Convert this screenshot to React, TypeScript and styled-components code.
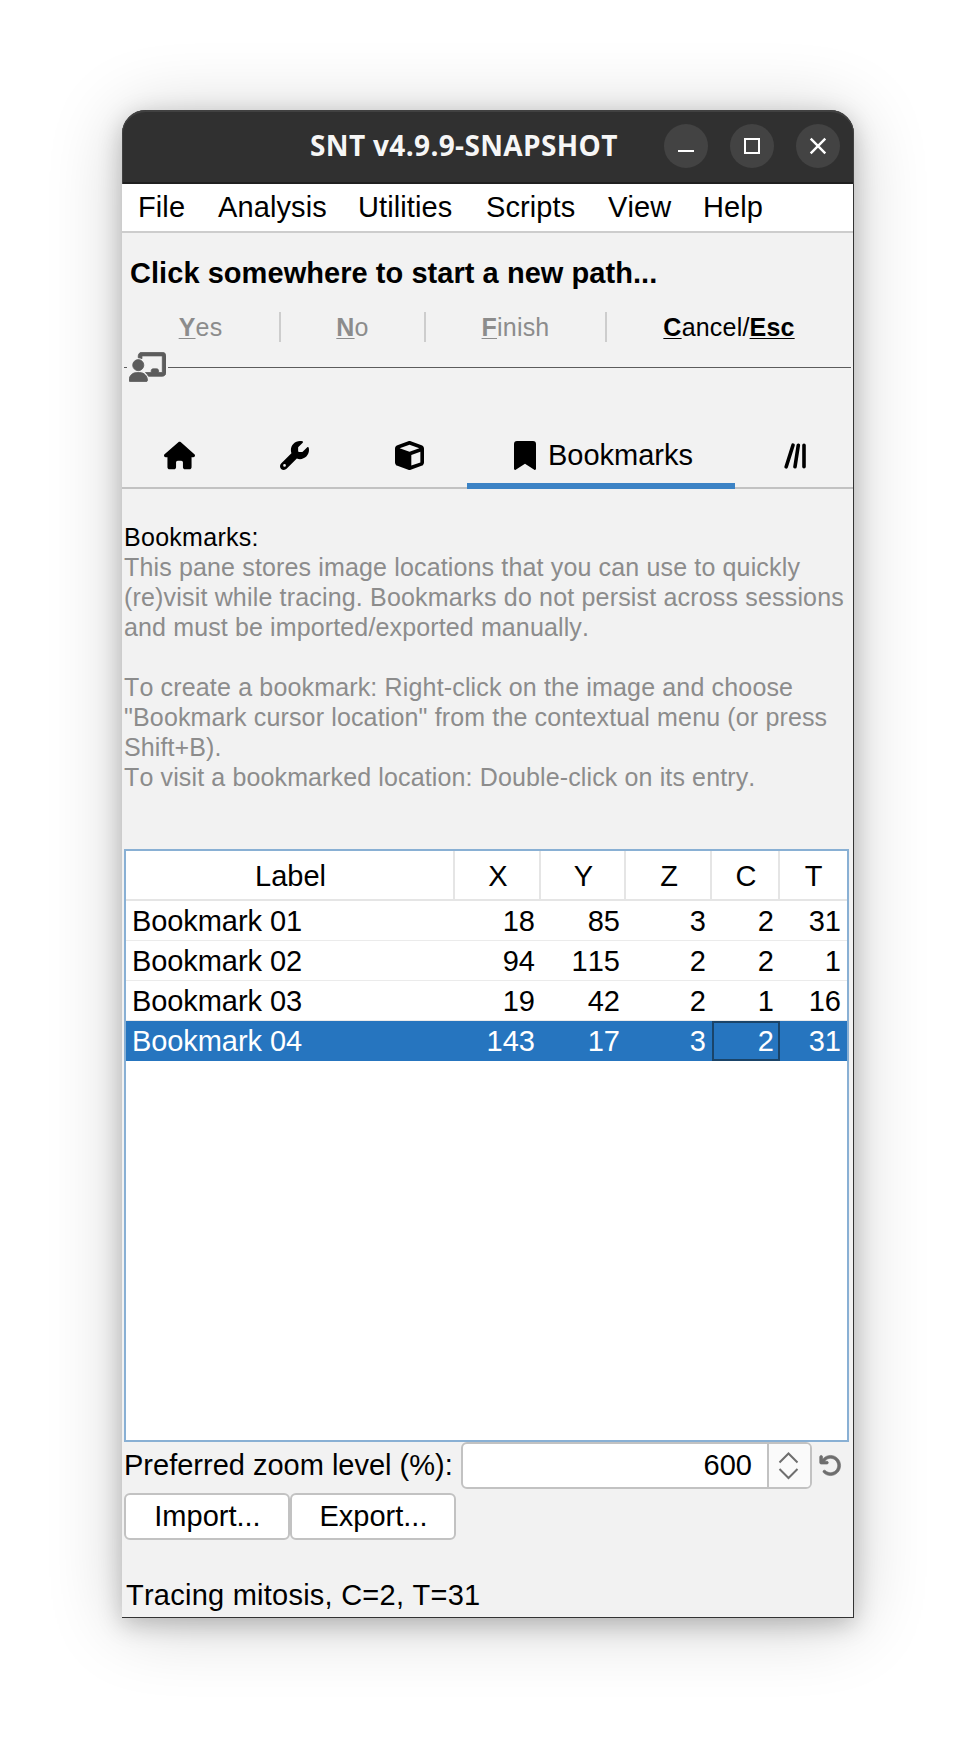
import React from "react";
import styled, { createGlobalStyle } from "styled-components";
import { FaHouse, FaWrench, FaCube, FaArrowRotateLeft } from "react-icons/fa6";

const Global = createGlobalStyle`
  * { box-sizing: border-box; }
  body { margin: 0; background: #fff; font-family: "Liberation Sans", Arial, sans-serif; font-kerning: none; }
  button, input { font: inherit; font-kerning: none; color: inherit; }
`;

const Desktop = styled.main`
  width: 975px;
  height: 1751px;
  padding: 110px 121px 0 122px;
  background: #fff;
  overflow: hidden;
`;

const Frame = styled.section`
  width: 732px;
  height: 1508px;
  display: flex;
  flex-direction: column;
  border-radius: 24px 24px 0 0;
  background: #f2f2f2;
  color: #000;
  font-size: 29px;
  box-shadow: 0 6px 24px rgba(0, 0, 0, 0.22), 0 6px 76px rgba(0, 0, 0, 0.2);
`;

const TitleBar = styled.header`
  height: 74px;
  flex: none;
  display: flex;
  align-items: center;
  padding: 0 14px 2px 188px;
  background: #303030;
  border-radius: 24px 24px 0 0;
  box-shadow: inset 0 2px #414141, inset 1px 0 #414141, inset -1px 0 #414141, inset 0 -2px #202020;
`;

const Title = styled.h1`
  margin: 0;
  padding-bottom: 2px;
  flex: 1;
  white-space: nowrap;
  color: #f6f6f6;
  font: 700 28px/40px "Open Sans", "Noto Sans", sans-serif;
  letter-spacing: 0.35px;
`;

const Controls = styled.div`
  display: flex;
  gap: 22px;
`;

const Control = styled.button`
  width: 44px;
  height: 44px;
  padding: 0;
  border: 0;
  border-radius: 50%;
  background: #434343;
  svg { display: block; }
`;

const Body = styled.div`
  flex: 1;
  display: flex;
  flex-direction: column;
  border-right: 1px solid #333;
  border-bottom: 1px solid #333;
`;

const MenuBar = styled.nav`
  height: 49px;
  flex: none;
  display: flex;
  align-items: center;
  gap: 32px;
  padding: 0 16px 2px;
  background: #fff;
  border-bottom: 2px solid #cdcdcd;
`;

const MenuItem = styled.span<{ $w: number }>`
  width: ${(p) => p.$w}px;
  white-space: nowrap;
  line-height: 44px;
  letter-spacing: 0.1px;
`;

const Prompt = styled.h2`
  margin: 23px 0 0 8px;
  font-size: 29px;
  font-weight: 700;
  line-height: 34px;
  letter-spacing: 0.05px;
  white-space: nowrap;
`;

const Answers = styled.div`
  display: grid;
  grid-template-columns: 157px 2px 143px 2px 179px 2px 1fr;
  align-items: center;
  height: 30px;
  margin-top: 22px;
`;

const Answer = styled.span<{ $enabled?: boolean }>`
  text-align: center;
  font-size: 25px;
  line-height: 30px;
  letter-spacing: 0.2px;
  padding-right: ${(p) => (p.$enabled ? 2 : 0)}px;
  color: ${(p) => (p.$enabled ? "#000" : "#8c8c8c")};
  b { text-decoration: underline; text-decoration-thickness: 1px; text-underline-offset: 2px; }
`;

const Divider = styled.i`
  height: 30px;
  background: #cdcdcd;
`;

const Separator = styled.div`
  height: 32px;
  margin: 9px 2px 0;
  display: flex;
  align-items: center;
  gap: 2px;
  color: #5c5c5c;
  &::before { content: ""; width: 3px; height: 1px; background: #5c5c5c; }
  &::after { content: ""; flex: 1; height: 1px; background: #5c5c5c; }
`;

const Tabs = styled.div`
  height: 65px;
  flex: none;
  margin-top: 41px;
  display: grid;
  grid-template-columns: 115px 115px 115px 268px 1fr;
  border-bottom: 2px solid #c2c2c2;
`;

const Tab = styled.div<{ $selected?: boolean; $shift?: number }>`
  display: flex;
  align-items: center;
  justify-content: center;
  gap: 12px;
  height: 65px;
  padding: 4px 0 0 ${(p) => p.$shift ?? 0}px;
  border-bottom: 6px solid ${(p) => (p.$selected ? "#3c83c5" : "transparent")};
  svg { display: block; }
`;

const Help = styled.section`
  margin: 33px 0 0 2px;
  height: 270px;
  flex: none;
  font-size: 25px;
  line-height: 30px;
  color: #8c8c8c;
`;

const Line = styled.p<{ $ls: number; $dark?: boolean }>`
  margin: 0;
  height: 30px;
  white-space: nowrap;
  letter-spacing: ${(p) => p.$ls}px;
  color: ${(p) => (p.$dark ? "#000" : "inherit")};
`;

const TableBox = styled.div`
  margin: 57px 4px 0 2px;
  height: 593px;
  flex: none;
  border: 2px solid #89b0d4;
  background: #fff;
`;

const Table = styled.table`
  width: 100%;
  table-layout: fixed;
  border-collapse: separate;
  border-spacing: 0;
`;

const Th = styled.th`
  height: 50px;
  padding: 2px 0 0 2px;
  font-weight: 400;
  text-align: center;
  border-bottom: 2px solid #e5e5e5;
  border-right: 2px solid #e5e5e5;
  &:last-child { border-right: 0; padding-left: 0; }
`;

const Row = styled.tr<{ $selected?: boolean }>`
  background: ${(p) => (p.$selected ? "#2675bf" : "#fff")};
  color: ${(p) => (p.$selected ? "#fff" : "#000")};
  td { border-bottom: ${(p) => (p.$selected ? "0" : "1px solid #ebebeb")}; }
`;

const Td = styled.td<{ $focus?: boolean }>`
  height: 40px;
  padding: 2px 6px 0;
  line-height: 37px;
  text-align: right;
  vertical-align: top;
  &:first-child { text-align: left; letter-spacing: -0.08px; }
  box-shadow: ${(p) => (p.$focus ? "inset 0 0 0 2px #1a4469" : "none")};
`;

const ZoomRow = styled.div`
  display: flex;
  align-items: center;
  height: 47px;
  padding: 0 11px 0 2px;
`;

const ZoomLabel = styled.label`
  width: 337px;
  white-space: nowrap;
`;

const Spinner = styled.div`
  width: 351px;
  height: 47px;
  display: flex;
  border: 2px solid #c2c2c2;
  border-radius: 6px;
  background: #fff;
  overflow: hidden;
`;

const Value = styled.span`
  flex: 1;
  padding-right: 15px;
  line-height: 42px;
  text-align: right;
`;

const Steppers = styled.span`
  width: 43px;
  border-left: 2px solid #c2c2c2;
  background: #fafafa;
`;

const Reset = styled.span`
  display: flex;
  margin-left: 7px;
  color: #6e6e6e;
  svg { overflow: visible; stroke: currentColor; stroke-width: 14px; }
`;

const Buttons = styled.div`
  display: flex;
  margin: 4px 0 0 2px;
`;

const Button = styled.button`
  width: 166px;
  height: 47px;
  padding: 0 0 1px 1px;
  border: 2px solid #c2c2c2;
  border-radius: 6px;
  background: #fff;
`;

const Status = styled.footer`
  margin: 38px 0 0 4px;
  line-height: 34px;
  letter-spacing: 0.24px;
  white-space: nowrap;
`;

const menus: [string, number][] = [
  ["File", 48], ["Analysis", 108], ["Utilities", 96],
  ["Scripts", 90], ["View", 63], ["Help", 60],
];

const helpLines: { text: string; ls: number; dark?: boolean }[] = [
  { text: "Bookmarks:", ls: 0.28, dark: true },
  { text: "This pane stores image locations that you can use to quickly", ls: 0.15 },
  { text: "(re)visit while tracing. Bookmarks do not persist across sessions", ls: 0.175 },
  { text: "and must be imported/exported manually.", ls: 0.13 },
  { text: "", ls: 0 },
  { text: "To create a bookmark: Right-click on the image and choose", ls: 0.16 },
  { text: "\"Bookmark cursor location\" from the contextual menu (or press", ls: 0.145 },
  { text: "Shift+B).", ls: 0.1 },
  { text: "To visit a bookmarked location: Double-click on its entry.", ls: 0.13 },
];

const columns: [string, number][] = [
  ["Label", 329], ["X", 86], ["Y", 85], ["Z", 86], ["C", 68], ["T", 67],
];

const bookmarks: (string | number)[][] = [
  ["Bookmark 01", 18, 85, 3, 2, 31],
  ["Bookmark 02", 94, 115, 2, 2, 1],
  ["Bookmark 03", 19, 42, 2, 1, 16],
  ["Bookmark 04", 143, 17, 3, 2, 31],
];

const selectedRow = 3;
const focusedColumn = 4;

const PresenterIcon = () => (
  <svg width="37" height="30" viewBox="0 0 640 512" fill="currentColor">
    <path d="M160 64c0-35.3 28.7-64 64-64H576c35.3 0 64 28.7 64 64V352c0 35.3-28.7 64-64 64H336.8c-11.8-25.5-29.9-47.5-52.4-64H384V320c0-17.7 14.3-32 32-32h64c17.7 0 32 14.3 32 32v32h64V64L224 64v49.1C205.2 102.2 183.3 96 160 96V64zm0 64a96 96 0 1 1 0 192 96 96 0 1 1 0-192zM133.3 352h53.3C260.3 352 320 411.7 320 485.3c0 14.7-11.9 26.7-26.7 26.7H26.7C11.9 512 0 500.1 0 485.3C0 411.7 59.7 352 133.3 352z" stroke="currentColor" strokeWidth="14" />
  </svg>
);

const BookmarkIcon = () => (
  <svg width="22" height="29" viewBox="0 0 22 29">
    <path d="M0 27.8V3a3 3 0 0 1 3-3h16a3 3 0 0 1 3 3v24.8a1.1 1.1 0 0 1-1.7.9L11 22.7l-9.3 6a1.1 1.1 0 0 1-1.7-.9z" />
  </svg>
);

export default function App() {
  return (
    <Desktop>
      <Global />
      <Frame>
        <TitleBar>
          <Title>SNT v4.9.9-SNAPSHOT</Title>
          <Controls>
            <Control aria-label="Minimize">
              <svg width="44" height="44"><path d="M14 27h16" stroke="#fff" strokeWidth="2" /></svg>
            </Control>
            <Control aria-label="Maximize">
              <svg width="44" height="44"><rect x="15" y="15" width="14" height="14" fill="none" stroke="#fff" strokeWidth="2" /></svg>
            </Control>
            <Control aria-label="Close">
              <svg width="44" height="44"><path d="M14.7 14.7l14.6 14.6M29.3 14.7L14.7 29.3" stroke="#fff" strokeWidth="2.4" /></svg>
            </Control>
          </Controls>
        </TitleBar>
        <Body>
          <MenuBar>
            {menus.map(([name, w]) => <MenuItem key={name} $w={w}>{name}</MenuItem>)}
          </MenuBar>
          <Prompt>Click somewhere to start a new path...</Prompt>
          <Answers>
            <Answer><b>Y</b>es</Answer>
            <Divider />
            <Answer><b>N</b>o</Answer>
            <Divider />
            <Answer><b>F</b>inish</Answer>
            <Divider />
            <Answer $enabled><b>C</b>ancel/<b>Esc</b></Answer>
          </Answers>
          <Separator><PresenterIcon /></Separator>
          <Tabs>
            <Tab><FaHouse size={31} /></Tab>
            <Tab><FaWrench size={29} /></Tab>
            <Tab><FaCube size={29} /></Tab>
            <Tab $selected $shift={5}><BookmarkIcon /><span>Bookmarks</span></Tab>
            <Tab $shift={2}>
              <svg width="22" height="26" viewBox="0 0 22 26" fill="none" stroke="#000" strokeWidth="3.6" strokeLinecap="round">
                <path d="M9 2.2L2.2 23.8M14.3 2.2L11 23.8M20 2.2v21.6" />
              </svg>
            </Tab>
          </Tabs>
          <Help>
            {helpLines.map((l, i) => <Line key={i} $ls={l.ls} $dark={l.dark}>{l.text}</Line>)}
          </Help>
          <TableBox>
            <Table>
              <colgroup>{columns.map(([n, w]) => <col key={n} width={w} />)}</colgroup>
              <thead><tr>{columns.map(([n]) => <Th key={n}>{n}</Th>)}</tr></thead>
              <tbody>
                {bookmarks.map((row, r) => (
                  <Row key={r} $selected={r === selectedRow}>
                    {row.map((cell, c) => (
                      <Td key={c} $focus={r === selectedRow && c === focusedColumn}>{cell}</Td>
                    ))}
                  </Row>
                ))}
              </tbody>
            </Table>
          </TableBox>
          <ZoomRow>
            <ZoomLabel>Preferred zoom level (%):</ZoomLabel>
            <Spinner>
              <Value>600</Value>
              <Steppers>
                <svg width="41" height="43" fill="none" stroke="#6e6e6e" strokeWidth="2">
                  <path d="M10.5 18.5l9-9 9 9M10.5 25l9 9 9-9" />
                </svg>
              </Steppers>
            </Spinner>
            <Reset><FaArrowRotateLeft size={23} /></Reset>
          </ZoomRow>
          <Buttons>
            <Button>Import...</Button>
            <Button>Export...</Button>
          </Buttons>
          <Status>Tracing mitosis, C=2, T=31</Status>
        </Body>
      </Frame>
    </Desktop>
  );
}
